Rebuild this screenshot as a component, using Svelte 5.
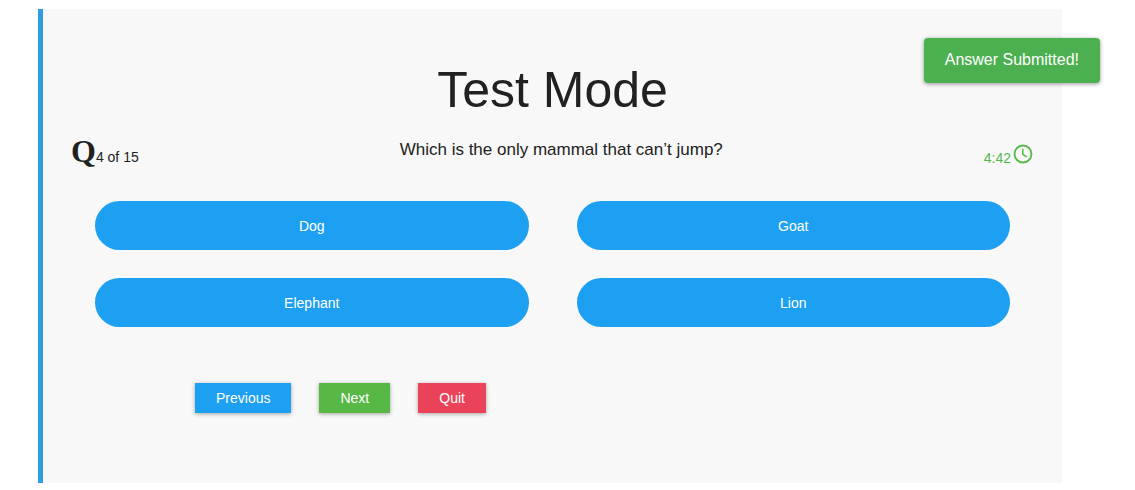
<script>
  let answers = ['Dog', 'Goat', 'Elephant', 'Lion'];
</script>

<main class="quiz">
  <h1>Test Mode</h1>
  <div class="info">
    <span class="counter"><b>Q</b>4 of 15</span>
    <p>Which is the only mammal that can’t jump?</p>
    <span class="timer"><span>4:42</span><svg viewBox="0 0 22 22" aria-hidden="true" fill="none" stroke="currentColor"><circle cx="11" cy="11" r="8.5" stroke-width="1.8" /><path d="M10.8 5.8v5.6l4 2.5" stroke-width="1.5" /></svg></span>
  </div>
  <div class="answers">
    {#each answers as answer}
      <button type="button">{answer}</button>
    {/each}
  </div>
  <div class="actions">
    <button type="button" class="previous">Previous</button>
    <button type="button" class="next">Next</button>
    <button type="button" class="quit">Quit</button>
  </div>
</main>
<div class="toast" role="status">Answer Submitted!</div>

<style>
  :global(body) {
    background: #fff;
    color: #212121;
    font-family: "Liberation Sans", Arial, sans-serif;
  }
  .quiz {
    box-sizing: border-box;
    margin: 9px 73px 7px 38px;
    padding: 53px 28px 70px;
    background: #f8f8f8;
    border-left: 5px solid #2f9de4;
  }
  h1 {
    margin: 0;
    font-size: 50px;
    font-weight: 400;
    line-height: 56px;
    text-align: center;
  }
  .info {
    display: flex;
    justify-content: space-between;
    height: 40px;
    margin-top: 12px;
    font-size: 14px;
  }
  .info p {
    margin: 0;
    font-size: 17px;
    line-height: 40px;
  }
  .counter {
    line-height: 42px;
  }
  .counter b {
    font-family: "Liberation Serif", serif;
    font-size: 32px;
  }
  .timer {
    display: flex;
    align-items: flex-end;
    gap: 1px;
    padding-bottom: 4px;
    color: #54b948;
    line-height: 16px;
  }
  .timer svg {
    width: 22px;
    height: 22px;
    margin-bottom: 1px;
  }
  button {
    border: 0;
    color: #fff;
    font: 14px "Liberation Sans", Arial, sans-serif;
    cursor: pointer;
  }
  .answers {
    display: grid;
    grid-template-columns: 1fr 1fr;
    gap: 28px 48px;
    margin: 31px 24px 0;
  }
  .answers button {
    height: 49px;
    border-radius: 25px;
    background: #1ea0f2;
  }
  .actions {
    display: flex;
    gap: 28px;
    margin: 56px 0 0 124px;
  }
  .actions button {
    height: 30px;
    padding: 0 21px;
    box-shadow: 0 1px 4px rgba(0, 0, 0, 0.35);
  }
  .actions .previous { background: #1ea0f2; }
  .actions .next { background: #57b846; }
  .actions .quit { background: #ea4359; }
  .toast {
    position: absolute;
    top: 38px;
    right: 35px;
    padding: 10px 21px 11px;
    border-radius: 4px;
    background: #4caf50;
    box-shadow: 0 1px 4px rgba(0, 0, 0, 0.4);
    color: #fff;
    font-size: 16px;
    line-height: 24px;
  }
</style>
